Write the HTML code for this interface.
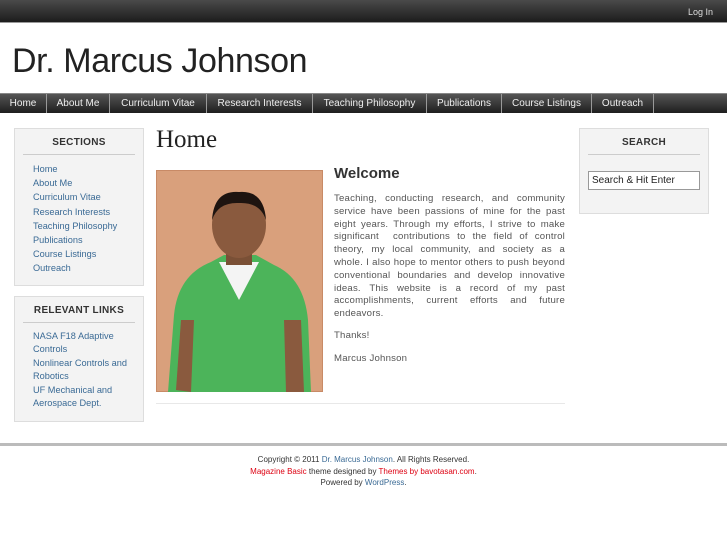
<!DOCTYPE html>
<html><head><meta charset="utf-8">
<style>
*{margin:0;padding:0;box-sizing:border-box}
body{width:727px;height:545px;overflow:hidden;background:#fff;font-family:"Liberation Sans",sans-serif;position:relative}
#top{position:absolute;left:0;top:0;width:727px;height:23px;background:linear-gradient(#4a4a4a,#1c1c1c);border-bottom:1px solid #999}
#top span{position:absolute;right:14px;top:7px;color:#ddd;font-size:9px}
h1{position:absolute;left:12px;top:42px;font-weight:normal;font-size:34px;color:#222;letter-spacing:-0.4px}
#nav{position:absolute;left:0;top:93px;width:727px;height:20px;background:linear-gradient(#555,#1e1e1e);border-top:1px solid #888}
#nav div{position:absolute;top:0;height:19px;color:#eee;font-size:10px;line-height:19px;text-align:center;border-right:1px solid #999}
.box{position:absolute;background:#f3f3f3;border:1px solid #ddd}
.box h3{font-size:10px;text-align:center;color:#333;margin:8px 8px 0;padding-bottom:6px;border-bottom:1px solid #ccc;letter-spacing:.3px}
.box ul{list-style:none;padding-left:18px;margin-top:7px}
.box li{font-size:9.2px;color:#3a6a95;line-height:14.2px}
.box li.two{line-height:13px;margin-bottom:1px}
h2{position:absolute;left:156px;top:126px;font-family:"Liberation Serif",serif;font-weight:normal;font-size:25px;color:#222}
#wel{position:absolute;left:334px;top:165px;font-size:15px;font-weight:bold;color:#333}
#txt{position:absolute;left:334px;top:193px;width:231px;font-size:9.6px;color:#555;line-height:12.8px;letter-spacing:.2px}
#txt div{text-align:justify;text-align-last:justify;white-space:nowrap;overflow:hidden}
#txt div.l{text-align-last:left}
#hr{position:absolute;left:156px;top:403px;width:409px;border-top:1px solid #e8e8e8}
#foot{position:absolute;left:0;top:443px;width:727px;height:102px;background:#fff;border-top:3px solid #bbb;text-align:center;font-size:8px;color:#333;line-height:11.5px;padding-top:8px}
.b{color:#3a6a95}.r{color:#d01}
</style></head><body>
<div id="top"><span>Log In</span></div>
<h1>Dr. Marcus Johnson</h1>
<div id="nav">
<div style="left:0;width:47px">Home</div>
<div style="left:47px;width:63px">About Me</div>
<div style="left:110px;width:97px">Curriculum Vitae</div>
<div style="left:207px;width:106px">Research Interests</div>
<div style="left:313px;width:114px">Teaching Philosophy</div>
<div style="left:427px;width:75px">Publications</div>
<div style="left:502px;width:90px">Course Listings</div>
<div style="left:592px;width:62px">Outreach</div>
</div>
<div class="box" style="left:14px;top:128px;width:130px;height:158px">
<h3>SECTIONS</h3>
<ul><li>Home</li><li>About Me</li><li>Curriculum Vitae</li><li>Research Interests</li><li>Teaching Philosophy</li><li>Publications</li><li>Course Listings</li><li>Outreach</li></ul>
</div>
<div class="box" style="left:14px;top:296px;width:130px;height:126px">
<h3>RELEVANT LINKS</h3>
<ul><li class="two">NASA F18 Adaptive<br>Controls</li><li class="two">Nonlinear Controls and<br>Robotics</li><li class="two">UF Mechanical and<br>Aerospace Dept.</li></ul>
</div>
<div class="box" style="left:579px;top:128px;width:130px;height:86px">
<h3>SEARCH</h3>
<div style="margin:16px 8px 0 8px;height:19px;border:1px solid #999;background:#fff;font-size:10px;line-height:17px;padding-left:3px;color:#222">Search &amp; Hit Enter</div>
</div>
<h2>Home</h2>
<svg style="position:absolute;left:156px;top:170px" width="167" height="222" viewBox="0 0 167 222">
<rect width="167" height="222" fill="#d9a07c"/>
<rect width="167" height="222" fill="none" stroke="#c88a66" stroke-width="2"/>
<path d="M12 222 L18 145 Q22 105 55 92 L68 85 L100 85 L118 95 Q148 108 152 150 L155 222 Z" fill="#4cb45a"/>
<path d="M63 92 L83 130 L103 92 Z" fill="#f4f4f4"/>
<rect x="70" y="70" width="26" height="25" fill="#7a5036"/>
<ellipse cx="83" cy="55" rx="27" ry="33" fill="#8a5a3e"/>
<path d="M56 50 Q58 20 83 22 Q108 20 110 50 Q104 32 83 33 Q62 32 56 50Z" fill="#1e1410"/>
<path d="M20 220 L25 150 L38 150 L35 222Z" fill="#8a5a3e"/>
<path d="M130 222 L128 150 L145 150 L148 222Z" fill="#8a5a3e"/>
</svg>
<div id="wel">Welcome</div>
<div id="txt">
<div>Teaching, conducting research, and community</div>
<div>service have been passions of mine for the past</div>
<div>eight years. Through my efforts, I strive to make</div>
<div>significant &nbsp;contributions to the field of control</div>
<div>theory, my local community, and society as a</div>
<div>whole. I also hope to mentor others to push beyond</div>
<div>conventional boundaries and develop innovative</div>
<div>ideas. This website is a record of my past</div>
<div>accomplishments, current efforts and future</div>
<div class="l">endeavors.</div>
<div class="l" style="margin-top:9px">Thanks!</div>
<div class="l" style="margin-top:10px">Marcus Johnson</div>
</div>
<div id="hr"></div>
<div id="foot">Copyright © 2011 <span class="b">Dr. Marcus Johnson</span>. All Rights Reserved.<br><span class="r">Magazine Basic</span> theme designed by <span class="r">Themes by bavotasan.com</span>.<br>Powered by <span class="b">WordPress</span>.</div>
</body></html>
